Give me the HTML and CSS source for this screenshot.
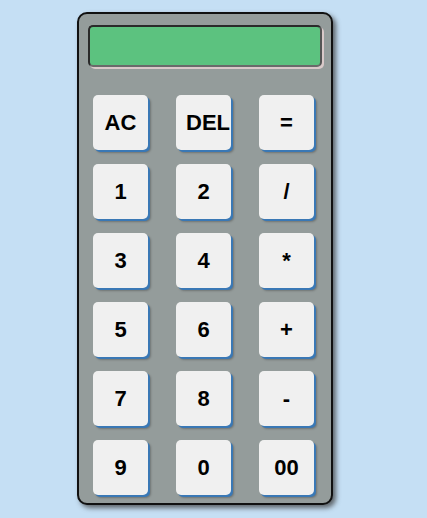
FILE: index.html
```html
<!DOCTYPE html>
<html>
<head>
<meta charset="utf-8">
<link rel="stylesheet" href="styles.css">
</head>
<body>
<div class="calc">
  <div class="display"></div>
  <div class="keys">
    <button class="key">AC</button>
    <button class="key">DEL</button>
    <button class="key">=</button>
    <button class="key">1</button>
    <button class="key">2</button>
    <button class="key">/</button>
    <button class="key">3</button>
    <button class="key">4</button>
    <button class="key">*</button>
    <button class="key">5</button>
    <button class="key">6</button>
    <button class="key">+</button>
    <button class="key">7</button>
    <button class="key">8</button>
    <button class="key">-</button>
    <button class="key">9</button>
    <button class="key">0</button>
    <button class="key">00</button>
  </div>
</div>
</body>
</html>
```
FILE: styles.css
```css
html, body {
  margin: 0;
  padding: 0;
  background: #c5dff4;
  width: 427px;
  height: 518px;
  overflow: hidden;
}
.calc {
  box-sizing: border-box;
  margin: 12px 0 0 77px;
  width: 256px;
  height: 493px;
  background: #949c9b;
  border: 2px solid #111;
  border-radius: 10px;
  box-shadow: 3px 3px 5px rgba(60, 60, 60, 0.75);
  padding: 11px 0 0 9px;
}
.display {
  box-sizing: border-box;
  width: 234px;
  height: 42px;
  background: #5cc27f;
  border: 2px solid #2a2a2a;
  border-bottom-color: #6a6a6a;
  border-right-color: #555;
  border-radius: 5px;
  box-shadow: 2px 2px 0 #d9c9c9;
}
.keys {
  display: grid;
  grid-template-columns: repeat(3, 55px);
  grid-auto-rows: 55px;
  column-gap: 28px;
  row-gap: 14px;
  margin: 28px 0 0 5px;
}
.key {
  box-sizing: border-box;
  border: none;
  margin: 0;
  padding: 0 10px;
  background: #f0f0f0;
  border-radius: 5px;
  box-shadow: 2px 2px 0 #3a78b5, 3px 3px 2px rgba(60,60,60,0.4);
  font-family: "Liberation Sans", Arial, sans-serif;
  font-weight: bold;
  font-size: 22px;
  color: #000;
  text-align: center;
}
```
